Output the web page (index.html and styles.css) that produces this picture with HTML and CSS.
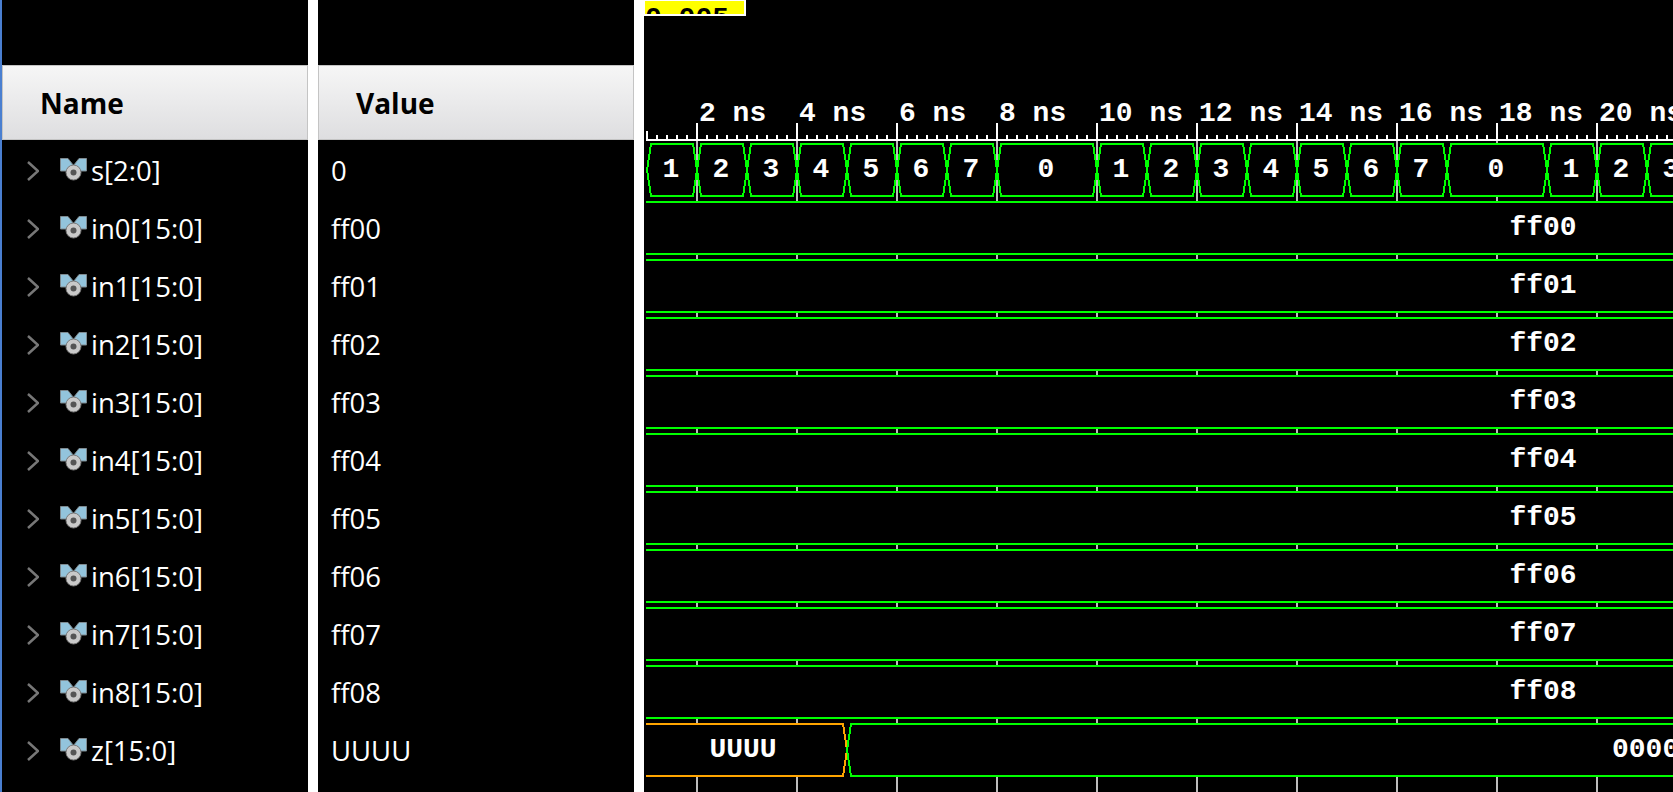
FILE: index.html
```html
<!DOCTYPE html>
<html lang="en">
<head>
<meta charset="utf-8">
<title>Waveform viewer</title>
<link rel="stylesheet" href="styles.css">
</head>
<body>
<svg class="defs" width="0" height="0" aria-hidden="true">
  <defs>
    <symbol id="chev" viewBox="0 0 12 20"><path d="M1 1l10 9-10 9"/></symbol>
    <symbol id="sig" viewBox="0 0 27 23">
      <path class="flag" d="M.5.5H8l5.5 7L19 .5h7.500V13H20l-6.500-5L7 13H.5z"/>
      <circle class="disc" cx="13.500" cy="14.500" r="7.500"/>
      <circle class="hub" cx="13.500" cy="14.500" r="3"/>
    </symbol>
  </defs>
</svg>
<div class="strip"></div>
<main class="panes">
  <section class="col col-name">
    <div class="head">Name</div>
    <div class="row"><svg class="chev"><use href="#chev"/></svg><svg class="sig"><use href="#sig"/></svg><span>s[2:0]</span></div>
    <div class="row"><svg class="chev"><use href="#chev"/></svg><svg class="sig"><use href="#sig"/></svg><span>in0[15:0]</span></div>
    <div class="row"><svg class="chev"><use href="#chev"/></svg><svg class="sig"><use href="#sig"/></svg><span>in1[15:0]</span></div>
    <div class="row"><svg class="chev"><use href="#chev"/></svg><svg class="sig"><use href="#sig"/></svg><span>in2[15:0]</span></div>
    <div class="row"><svg class="chev"><use href="#chev"/></svg><svg class="sig"><use href="#sig"/></svg><span>in3[15:0]</span></div>
    <div class="row"><svg class="chev"><use href="#chev"/></svg><svg class="sig"><use href="#sig"/></svg><span>in4[15:0]</span></div>
    <div class="row"><svg class="chev"><use href="#chev"/></svg><svg class="sig"><use href="#sig"/></svg><span>in5[15:0]</span></div>
    <div class="row"><svg class="chev"><use href="#chev"/></svg><svg class="sig"><use href="#sig"/></svg><span>in6[15:0]</span></div>
    <div class="row"><svg class="chev"><use href="#chev"/></svg><svg class="sig"><use href="#sig"/></svg><span>in7[15:0]</span></div>
    <div class="row"><svg class="chev"><use href="#chev"/></svg><svg class="sig"><use href="#sig"/></svg><span>in8[15:0]</span></div>
    <div class="row"><svg class="chev"><use href="#chev"/></svg><svg class="sig"><use href="#sig"/></svg><span>z[15:0]</span></div>
  </section>
  <section class="col col-value">
    <div class="head">Value</div>
    <div class="row">0</div>
    <div class="row">ff00</div>
    <div class="row">ff01</div>
    <div class="row">ff02</div>
    <div class="row">ff03</div>
    <div class="row">ff04</div>
    <div class="row">ff05</div>
    <div class="row">ff06</div>
    <div class="row">ff07</div>
    <div class="row">ff08</div>
    <div class="row">UUUU</div>
  </section>
  <section class="wave">
    <svg class="wave-svg" width="1029" height="792" viewBox="644 0 1029 792">
      <defs><clipPath id="marker"><rect x="645" y="1" width="99" height="13"/></clipPath></defs>

      <!-- time cursor marker -->
      <path class="w-fill" d="M644 0H746V16H644z"/>
      <rect class="yellow" x="645" y="1" width="99" height="13"/>
      <text class="lbl ink" x="645" y="26" clip-path="url(#marker)">0.005</text>

      <!-- grid lines -->
      <path class="grid" d="M697 141V792M797 141V792M897 141V792M997 141V792M1097 141V792M1197 141V792M1297 141V792M1397 141V792M1497 141V792M1597 141V792"/>

      <!-- ruler -->
      <line class="tick" x1="646" y1="140" x2="1673" y2="140"/>
      <line class="tick minor" x1="656" y1="137" x2="1673" y2="137"/>
      <path class="tick" d="M647 131V140M697 123V140M797 123V140M897 123V140M997 123V140M1097 123V140M1197 123V140M1297 123V140M1397 123V140M1497 123V140M1597 123V140"/>
      <text class="lbl" x="699" y="121">2 ns</text>
      <text class="lbl" x="799" y="121">4 ns</text>
      <text class="lbl" x="899" y="121">6 ns</text>
      <text class="lbl" x="999" y="121">8 ns</text>
      <text class="lbl" x="1099" y="121">10 ns</text>
      <text class="lbl" x="1199" y="121">12 ns</text>
      <text class="lbl" x="1299" y="121">14 ns</text>
      <text class="lbl" x="1399" y="121">16 ns</text>
      <text class="lbl" x="1499" y="121">18 ns</text>
      <text class="lbl" x="1599" y="121">20 ns</text>

      <!-- s[2:0] -->
      <g class="bus">
        <polygon points="647,170 651,144 693,144 697,170 693,196 651,196"/>
        <polygon points="697,170 701,144 743,144 747,170 743,196 701,196"/>
        <polygon points="747,170 751,144 793,144 797,170 793,196 751,196"/>
        <polygon points="797,170 801,144 843,144 847,170 843,196 801,196"/>
        <polygon points="847,170 851,144 893,144 897,170 893,196 851,196"/>
        <polygon points="897,170 901,144 943,144 947,170 943,196 901,196"/>
        <polygon points="947,170 951,144 993,144 997,170 993,196 951,196"/>
        <polygon points="997,170 1001,144 1093,144 1097,170 1093,196 1001,196"/>
        <polygon points="1097,170 1101,144 1143,144 1147,170 1143,196 1101,196"/>
        <polygon points="1147,170 1151,144 1193,144 1197,170 1193,196 1151,196"/>
        <polygon points="1197,170 1201,144 1243,144 1247,170 1243,196 1201,196"/>
        <polygon points="1247,170 1251,144 1293,144 1297,170 1293,196 1251,196"/>
        <polygon points="1297,170 1301,144 1343,144 1347,170 1343,196 1301,196"/>
        <polygon points="1347,170 1351,144 1393,144 1397,170 1393,196 1351,196"/>
        <polygon points="1397,170 1401,144 1443,144 1447,170 1443,196 1401,196"/>
        <polygon points="1447,170 1451,144 1543,144 1547,170 1543,196 1451,196"/>
        <polygon points="1547,170 1551,144 1593,144 1597,170 1593,196 1551,196"/>
        <polygon points="1597,170 1601,144 1643,144 1647,170 1643,196 1601,196"/>
        <polygon points="1647,170 1651,144 1690,144 1690,196 1651,196"/>
      </g>
      <g class="lbl mid">
        <text x="671" y="177">1</text><text x="721" y="177">2</text><text x="771" y="177">3</text><text x="821" y="177">4</text><text x="871" y="177">5</text><text x="921" y="177">6</text><text x="971" y="177">7</text><text x="1046" y="177">0</text><text x="1121" y="177">1</text><text x="1171" y="177">2</text><text x="1221" y="177">3</text><text x="1271" y="177">4</text><text x="1321" y="177">5</text><text x="1371" y="177">6</text><text x="1421" y="177">7</text><text x="1496" y="177">0</text><text x="1571" y="177">1</text><text x="1621" y="177">2</text><text x="1671" y="177">3</text>
      </g>

      <!-- 16-bit inputs -->
      <g class="band">
        <rect x="646" y="202" width="1030" height="52"/>
        <rect x="646" y="260" width="1030" height="52"/>
        <rect x="646" y="318" width="1030" height="52"/>
        <rect x="646" y="376" width="1030" height="52"/>
        <rect x="646" y="434" width="1030" height="52"/>
        <rect x="646" y="492" width="1030" height="52"/>
        <rect x="646" y="550" width="1030" height="52"/>
        <rect x="646" y="608" width="1030" height="52"/>
        <rect x="646" y="666" width="1030" height="52"/>
      </g>
      <path class="trace" d="M646 202H1673M646 254H1673M646 260H1673M646 312H1673M646 318H1673M646 370H1673M646 376H1673M646 428H1673M646 434H1673M646 486H1673M646 492H1673M646 544H1673M646 550H1673M646 602H1673M646 608H1673M646 660H1673M646 666H1673M646 718H1673"/>
      <g class="lbl mid">
        <text x="1543" y="235">ff00</text>
        <text x="1543" y="293">ff01</text>
        <text x="1543" y="351">ff02</text>
        <text x="1543" y="409">ff03</text>
        <text x="1543" y="467">ff04</text>
        <text x="1543" y="525">ff05</text>
        <text x="1543" y="583">ff06</text>
        <text x="1543" y="641">ff07</text>
        <text x="1543" y="699">ff08</text>
      </g>

      <!-- z[15:0] -->
      <polyline class="z-u" points="646,724 843,724 847,750 843,776 646,776"/>
      <polyline class="z-v" points="1690,724 851,724 847,750 851,776 1690,776"/>
      <text class="lbl mid" x="743" y="757">UUUU</text>
      <text class="lbl" x="1612" y="757">0000</text>
    </svg>
  </section>
</main>
</body>
</html>
```
FILE: styles.css
```css
* { box-sizing: border-box; }

html, body { margin: 0; height: 100%; }

body {
  display: flex;
  width: 1673px;
  height: 792px;
  overflow: hidden;
  background: #fff;
  font-family: "Open Sans", "Noto Sans", sans-serif;
}

.defs { position: absolute; }

.strip { flex: 0 0 2px; background: #4a7fd0; }

.panes { flex: 1; display: flex; gap: 10px; }

.col {
  background: #000;
  color: #fff;
  padding-top: 65px;
  font-size: 27.5px;
  overflow: hidden;
}
.col-name { flex: 0 0 306px; }
.col-value { flex: 0 0 316px; }

.head {
  height: 75px;
  display: flex;
  align-items: center;
  border: 1px solid #c4c4c4;
  background: linear-gradient(#f6f6f6, #dedee0);
  color: #000;
  font-size: 28px;
  font-weight: 700;
}
.col-name .head { padding-left: 37px; }
.col-value .head { padding-left: 37px; }

.row {
  height: 58px;
  display: flex;
  align-items: center;
  padding-top: 3px;
}
.col-name .row { padding-left: 25px; }
.col-value .row { padding-left: 13px; }

.chev {
  flex: none;
  width: 12px;
  height: 20px;
  margin-right: 21px;
  margin-top: 0;
}
.sig {
  flex: none;
  width: 27px;
  height: 23px;
  margin-right: 4px;
  margin-top: -2px;
}
.flag { fill: #93c4dc; stroke: #7f8a90; stroke-width: 1; }
.disc { fill: #c9c9c9; stroke: #777; stroke-width: 1; }
.hub { fill: #555; }

#chev path { fill: none; stroke: #777; stroke-width: 2.500; }

.wave { flex: 1; background: #000; overflow: hidden; }
.wave-svg { display: block; }

.w-fill { fill: #fff; }
.yellow { fill: #ff0; }

.grid { fill: none; stroke: #bdbdbd; stroke-width: 2; shape-rendering: crispEdges; }
.tick { fill: none; stroke: #fff; stroke-width: 2; shape-rendering: crispEdges; }
.tick.minor { stroke-width: 4; stroke-dasharray: 2 8; }

.lbl {
  font-family: "Liberation Mono", monospace;
  font-size: 28px;
  font-weight: 700;
  fill: #fff;
}
.lbl.ink { fill: #000; }
.mid { text-anchor: middle; }

.bus polygon {
  fill: #000;
  stroke: #0f0;
  stroke-width: 2;
  stroke-linejoin: bevel;
  shape-rendering: crispEdges;
}
.band rect { fill: #000; }
.trace { fill: none; stroke: #0f0; stroke-width: 2; shape-rendering: crispEdges; }
.z-u, .z-v { fill: #000; stroke-width: 2; stroke-linejoin: bevel; shape-rendering: crispEdges; }
.z-u { stroke: #ffa500; }
.z-v { stroke: #0f0; }
```
